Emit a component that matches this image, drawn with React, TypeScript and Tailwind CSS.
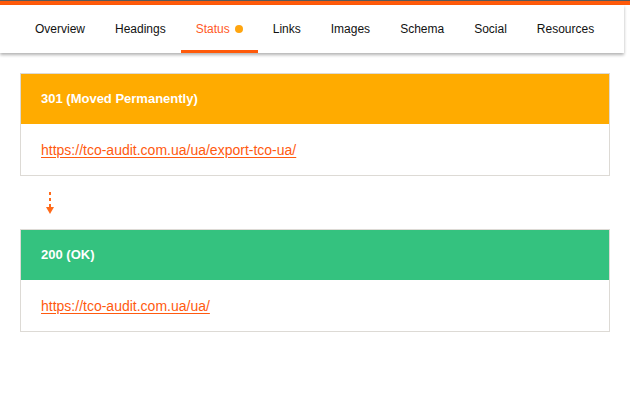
import React from "react";

const tabs = ["Overview", "Headings", "Status", "Links", "Images", "Schema", "Social", "Resources"];

function Card({ title, url, color }: { title: string; url: string; color: string }) {
  return (
    <div className="border border-[#dddad5] bg-white">
      <div className={`h-[50px] flex items-center px-[20px] text-white font-bold text-[13px] ${color}`}>{title}</div>
      <div className="h-[51px] flex items-center px-[20px] pt-[1px]">
        <a href="#" className="text-[14px] text-[#ff5a0f] underline underline-offset-[2px]">{url}</a>
      </div>
    </div>
  );
}

export default function App() {
  return (
    <div className="w-[630px] h-[395px] bg-white overflow-hidden" style={{ fontFamily: '"Liberation Sans", Arial, sans-serif' }}>
      <div className="h-[1px] bg-[#5a5a5a]" />
      <div className="h-[4px] bg-[#ff5a0a]" />
      <div className="mr-[6px] bg-white shadow-[0_2px_3px_rgba(0,0,0,0.3)] h-[48px] flex pl-[20px]">
        {tabs.map((t) => {
          const active = t === "Status";
          return (
            <div
              key={t}
              className={`relative flex items-center px-[15px] text-[12px] ${active ? "text-[#ff5a1f]" : "text-[#111]"}`}
            >
              <span className="pb-[1px]">{t}</span>
              {active && <span className="ml-[5px] w-[8px] h-[8px] rounded-full bg-[#ffa50f]" />}
              {active && <span className="absolute left-0 right-0 bottom-0 h-[3px] bg-[#ff5a0a]" />}
            </div>
          );
        })}
      </div>
      <div className="px-[20px] pt-[20px]">
        <Card title="301 (Moved Permanently)" url="https://tco-audit.com.ua/ua/export-tco-ua/" color="bg-[#ffab00]" />
        <div className="h-[53px] pl-[25px] flex items-start pt-[15px]">
          <svg width="10" height="24" viewBox="0 0 10 24">
            <line x1="5" y1="1" x2="5" y2="17" stroke="#ff6a1a" strokeWidth="2" strokeDasharray="3 3" />
            <polygon points="1,16 9,16 5,23" fill="#ff6a1a" />
          </svg>
        </div>
        <Card title="200 (OK)" url="https://tco-audit.com.ua/ua/" color="bg-[#34c27f]" />
      </div>
    </div>
  );
}
